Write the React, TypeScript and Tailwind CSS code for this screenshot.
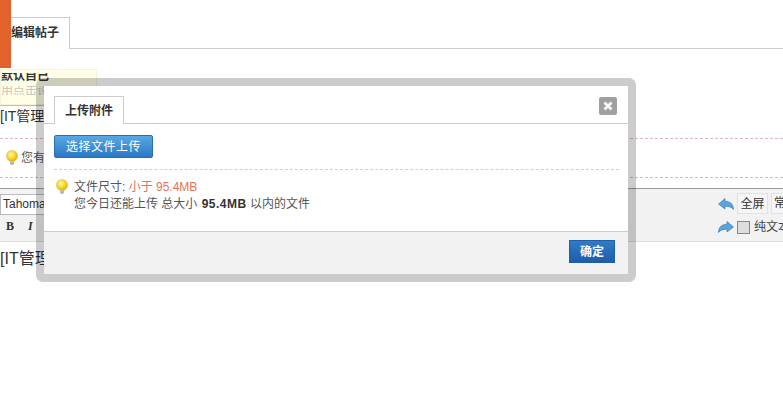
const cjk = "font-['Tahoma','Liberation_Sans','Noto_Sans_CJK_SC',sans-serif]"

const Bulb = () => (
  <svg width="14" height="16" viewBox="0 0 14 16" className="shrink-0">
    <defs>
      <radialGradient id="bulb" cx="40%" cy="35%" r="70%">
        <stop offset="0%" stopColor="#fff7a0" />
        <stop offset="60%" stopColor="#f6d21e" />
        <stop offset="100%" stopColor="#d9a90c" />
      </radialGradient>
    </defs>
    <circle cx="7" cy="6" r="5.5" fill="url(#bulb)" stroke="#d8b63a" strokeWidth="0.6" />
    <path d="M5 11.5h4v2.2l-1 1.3h-2l-1-1.3z" fill="#b9b9a8" />
  </svg>
)

const Undo = ({ flip }: { flip?: boolean }) => (
  <svg width="16" height="12" viewBox="0 0 16 12" className={flip ? "shrink-0 -scale-x-100" : "shrink-0"}>
    <path d="M0.5 6L7 0.5V3.2C12 3.2 15.5 6 15.5 11.5C13.5 9 11 8.2 7 8.2V11z" fill="#5aa4dc" stroke="#2f74ad" strokeWidth="0.6" />
  </svg>
)

const Background = () => (
  <div className="flex flex-col">
    <div className="flex h-[49px] items-end border-b border-[#ccc] pt-[17px]">
      <div className="relative -mb-px flex h-[32px] w-[70px] items-center justify-end border-r border-t border-[#ccc] bg-white pr-[10px] pb-[2px] text-[12px] font-bold text-[#333]">
        编辑帖子
      </div>
    </div>
    <div className="mt-[20px] flex h-[36px] w-[97px] flex-col overflow-hidden border border-[#f3f3d8] bg-[#ffffe8] pt-[3px] text-[12px] leading-[16px]">
      <div className="h-[9px] overflow-hidden">
        <div className="-mt-[5px] font-bold text-[#333]">默认自己</div>
      </div>
      <div className="mt-[4px] h-[9px] overflow-hidden">
        <div className="-mt-[3px] text-[#c4c4c4]">用点击设置</div>
      </div>
    </div>
    <div className="flex h-[22px] w-[300px] items-center border-t border-[#bbb] text-[14px] text-[#333]">[IT管理格式</div>
    <div className="mt-[11px] flex h-[40px] items-center gap-[2px] border-y border-dashed border-[#dcb8b8] pl-[5px] text-[12px] text-[#555]">
      <Bulb />
      您有
    </div>
    <div className="mt-[10px] flex h-[54px] justify-between border-t border-b border-t-[#999] border-b-[#ddd] bg-[#f2f2f2]">
      <div className="flex flex-col">
        <div className="mt-[5px] h-[21px] w-[60px] border border-[#bbb] bg-white pl-[2px] text-[12px] leading-[19px] text-[#333]">Tahoma</div>
        <div className="mt-[2px] flex gap-[14px] pl-[6px] font-['Liberation_Serif',serif] text-[12px] font-bold text-[#333]">
          <span>B</span>
          <span className="italic">I</span>
        </div>
      </div>
      <div className="flex w-[65px] shrink-0 flex-col overflow-hidden pt-[4px]">
        <div className="flex items-center gap-[3px]">
          <Undo />
          <span className="flex h-[21px] w-[31px] shrink-0 items-center justify-center border border-[#d8e4ee] bg-[#f6f6f6] text-[12px] text-[#333]">全屏</span>
          <span className="h-[21px] w-[20px] shrink-0 overflow-hidden whitespace-nowrap border border-[#d8e4ee] bg-[#f6f6f6] pl-[2px] text-[12px] leading-[19px] text-[#333]">常用</span>
        </div>
        <div className="mt-[4px] flex items-center gap-[3px]">
          <Undo flip />
          <span className="h-[13px] w-[13px] shrink-0 border border-[#888] bg-[#ddd]" />
          <span className="ml-[1px] whitespace-nowrap text-[12px] text-[#444]">纯文本</span>
        </div>
      </div>
    </div>
    <div className="pt-[5px] text-[16px] text-[#333]">[IT管理格式</div>
  </div>
)

const Modal = () => (
  <div className="absolute left-[36px] top-[78px] h-[204px] w-[600px] rounded-[7px] border-[8px] border-black/20">
    <div className="relative flex h-full flex-col bg-white">
      <div className="flex h-[38px] items-end border-b border-[#ccc] pl-[10px]">
        <div className="-mb-px flex h-[28px] w-[70px] items-center justify-center border border-b-0 border-[#ccc] bg-white text-[12px] font-bold text-[#333]">
          上传附件
        </div>
      </div>
      <button className="absolute right-[11px] top-[11px] flex h-[18px] w-[18px] items-center justify-center rounded-[2px] bg-[#a0a0a0] text-white">
        <svg width="10" height="10" viewBox="0 0 10 10">
          <path d="M1.5 1.5l7 7M8.5 1.5l-7 7" stroke="#fff" strokeWidth="2.6" />
        </svg>
      </button>
      <div className="flex-1 px-[10px] pt-[11px]">
        <div className="flex h-[23px] w-[99px] items-center justify-center rounded-[2px] border border-[#2a6ea8] bg-gradient-to-b from-[#58a8e6] to-[#2b78c4] text-[12px] tracking-[0.5px] text-white">
          选择文件上传
        </div>
        <div className="mt-[11px] border-t border-dashed border-[#d8cccc] pt-[9px] pl-[1px] mr-[-1px]">
          <div className="flex gap-[5px]">
            <Bulb />
            <div className="text-[12px] leading-[17px] text-[#555]">
              <div>
                文件尺寸: <span className="text-[#e0745c]">小于 95.4MB</span>
              </div>
              <div>
                您今日还能上传 总大小 <span className="ml-[1px] font-bold tracking-[0.5px] text-[#333]">95.4MB</span> 以内的文件
              </div>
            </div>
          </div>
        </div>
      </div>
      <div className="flex h-[43px] items-center justify-end border-t border-[#ccc] bg-[#f2f2f2] pr-[13px] pb-[3px]">
        <div className="flex h-[23px] w-[46px] items-center justify-center border border-[#1e5fa8] bg-gradient-to-b from-[#2f7cc8] to-[#1f5ca8] text-[12px] font-bold text-white">
          确定
        </div>
      </div>
    </div>
  </div>
)

export default function App() {
  return (
    <div className={`relative h-[406px] w-[783px] overflow-hidden bg-white ${cjk}`}>
      <Background />
      <div className="absolute left-0 top-0 h-[68px] w-[11px] bg-[#e2622c]" />
      <Modal />
    </div>
  )
}
